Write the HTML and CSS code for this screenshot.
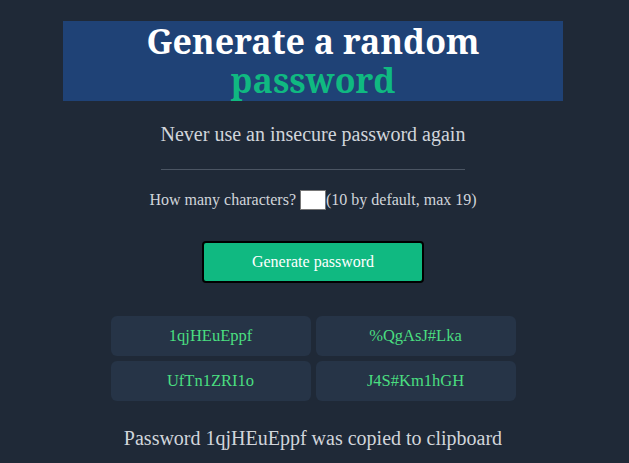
FILE: index.html
```html
<!DOCTYPE html>
<html>
<head>
<meta charset="utf-8">
<link rel="stylesheet" href="styles.css">
</head>
<body>
<main class="page">
  <h1 class="banner">Generate a random <span class="accent">password</span></h1>
  <p class="subtitle">Never use an insecure password again</p>
  <hr class="divider">
  <div class="length-row">
    <label class="length-label">How many characters?</label><input class="length-input" type="text"><span class="length-hint">(10 by default, max 19)</span>
  </div>
  <button class="generate-btn">Generate password</button>
  <div class="results">
    <div class="pw-card">1qjHEuEppf</div>
    <div class="pw-card">%QgAsJ#Lka</div>
    <div class="pw-card">UfTn1ZRI1o</div>
    <div class="pw-card">J4S#Km1hGH</div>
  </div>
  <p class="copied">Password 1qjHEuEppf was copied to clipboard</p>
</main>
</body>
</html>
```

FILE: styles.css
```css
html, body {
  margin: 0;
  padding: 0;
  background: #1f2937;
}
body {
  font-family: "Liberation Serif", "Times New Roman", serif;
  color: #d1d5db;
}
.page {
  display: flex;
  flex-direction: column;
  align-items: center;
  padding-top: 21px;
  padding-right: 3px;
}
.banner {
  width: 500px;
  height: 80px;
  box-sizing: border-box;
  margin: 0;
  padding-top: 1px;
  background: #1f4276;
  color: #ffffff;
  text-align: center;
  font-family: "Noto Serif", "DejaVu Serif", serif;
  font-weight: 700;
  font-size: 34px;
  line-height: 39px;
}
.accent {
  color: #10b981;
}
.subtitle {
  margin: 22px 0 0;
  font-size: 20px;
  line-height: 23px;
  color: #d1d5db;
}
.divider {
  width: 304px;
  margin: 23px 0 0;
  border: 0;
  border-top: 1px solid #4b5563;
}
.length-row {
  margin-top: 20px;
  display: flex;
  align-items: center;
  font-size: 16px;
  color: #d1d5db;
}
.length-label {
  margin-right: 4px;
}
.length-input {
  width: 26px;
  height: 20px;
  box-sizing: border-box;
  border: 1px solid #767676;
  background: #ffffff;
  padding: 0;
  margin: 0;
}
.generate-btn {
  margin-top: 31px;
  width: 222px;
  height: 42px;
  background: #10b981;
  border: 2px solid #000000;
  border-radius: 4px;
  color: #ffffff;
  font-family: "Liberation Serif", serif;
  font-size: 16px;
}
.results {
  margin-top: 33px;
  display: grid;
  grid-template-columns: 200px 200px;
  gap: 5px;
}
.pw-card {
  height: 40px;
  background: #263447;
  border-radius: 6px;
  color: #4ade80;
  font-size: 16.5px;
  display: flex;
  align-items: center;
  justify-content: center;
}
.copied {
  margin: 26px 0 0;
  font-size: 20px;
  color: #d1d5db;
}
```
